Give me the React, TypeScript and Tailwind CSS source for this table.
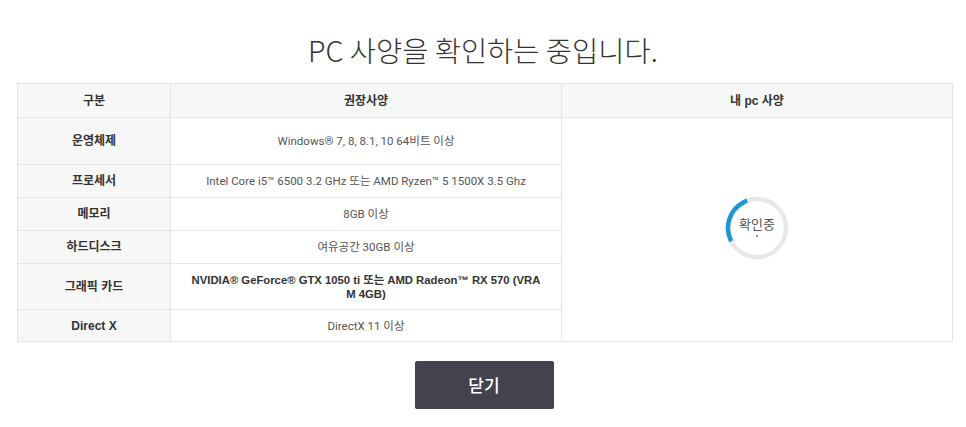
import React from "react";

const rows: { label: string; value: React.ReactNode; h: string; bold?: boolean }[] = [
  { label: "운영체제", value: "Windows® 7, 8, 8.1, 10 64비트 이상", h: "h-[47px]" },
  { label: "프로세서", value: "Intel Core i5™ 6500 3.2 GHz 또는 AMD Ryzen™ 5 1500X 3.5 Ghz", h: "h-[33px]" },
  { label: "메모리", value: "8GB 이상", h: "h-[33px]" },
  { label: "하드디스크", value: "여유공간 30GB 이상", h: "h-[33px]" },
  {
    label: "그래픽 카드",
    value: (
      <>
        NVIDIA® GeForce® GTX 1050 ti 또는 AMD Radeon™ RX 570 (VRA
        <br />M 4GB)
      </>
    ),
    h: "h-[46px]",
    bold: true,
  },
  { label: "Direct X", value: "DirectX 11 이상", h: "h-[31px]" },
];

function Spinner() {
  const r = 29;
  const c = 2 * Math.PI * r;
  const arc = c * (97 / 360);
  return (
    <div className="relative w-[64px] h-[64px]">
      <svg width="64" height="64" viewBox="0 0 64 64" className="absolute inset-0">
        <circle cx="32" cy="32" r={r} fill="none" stroke="#e8e8e8" strokeWidth="4.5" />
        <circle
          cx="32"
          cy="32"
          r={r}
          fill="none"
          stroke="#1d98d4"
          strokeWidth="4.5"
          strokeDasharray={`${arc} ${c}`}
          transform="rotate(153 32 32)"
        />
      </svg>
      <div className="absolute inset-0 flex flex-col items-center justify-center">
        <span className="text-[13px] leading-[14px] text-[#555] font-['Noto_Sans_CJK_KR',sans-serif] mt-[-3px]">
          확인중
        </span>
        <span className="block w-[2px] h-[2px] bg-[#777] rounded-full mt-[4px]" />
      </div>
    </div>
  );
}

export default function App() {
  const bodyFont = "font-['Roboto','Noto_Sans_CJK_KR',sans-serif]";
  const boldFont = "font-['Liberation_Sans','Noto_Sans_CJK_KR',sans-serif]";
  return (
    <div className="w-[966px] h-[427px] bg-white overflow-hidden">
      <div className="mt-[30px] h-[40px] leading-[40px] text-center text-[28.5px] font-light text-[#333] font-['Noto_Sans_CJK_KR',sans-serif]">
        PC 사양을 확인하는 중입니다.
      </div>
      <div className="mt-[13px] mx-[17px] w-[936px] border border-[#e6e6e6] flex flex-col">
        <div className="flex h-[34px] bg-[#f7f7f7] border-b border-[#e6e6e6]">
          <div className={`w-[153px] border-r border-[#e6e6e6] flex items-center justify-center text-[12px] font-bold text-[#333] ${boldFont}`}>
            구분
          </div>
          <div className={`w-[391px] border-r border-[#e6e6e6] flex items-center justify-center text-[12px] font-bold text-[#333] ${boldFont}`}>
            권장사양
          </div>
          <div className={`flex-1 flex items-center justify-center text-[12px] font-bold text-[#333] ${boldFont}`}>
            내 pc 사양
          </div>
        </div>
        <div className="flex">
          <div className="w-[544px] flex flex-col">
            {rows.map((r, i) => (
              <div
                key={r.label}
                className={`flex ${r.h} ${i < rows.length - 1 ? "border-b border-[#e6e6e6]" : ""}`}
              >
                <div className={`w-[153px] bg-[#f7f7f7] border-r border-[#e6e6e6] flex items-center justify-center text-[12px] font-bold text-[#333] ${boldFont}`}>
                  {r.label}
                </div>
                <div
                  className={`w-[391px] border-r border-[#e6e6e6] flex items-center justify-center text-center leading-[14px] px-[10px] ${
                    r.bold ? `text-[11.3px] font-bold text-[#333] ${boldFont}` : `text-[11.5px] text-[#555] ${bodyFont}`
                  }`}
                >
                  <span className="whitespace-nowrap">{r.value}</span>
                </div>
              </div>
            ))}
          </div>
          <div className="flex-1 flex items-center justify-center">
            <div className="mt-[-3px]">
              <Spinner />
            </div>
          </div>
        </div>
      </div>
      <div className="mt-[19px] flex justify-center pl-[2px]">
        <button className="w-[139px] h-[48px] bg-[#43424d] rounded-[2px] text-white text-[17px] font-medium font-['Noto_Sans_CJK_KR',sans-serif]">
          닫기
        </button>
      </div>
    </div>
  );
}
